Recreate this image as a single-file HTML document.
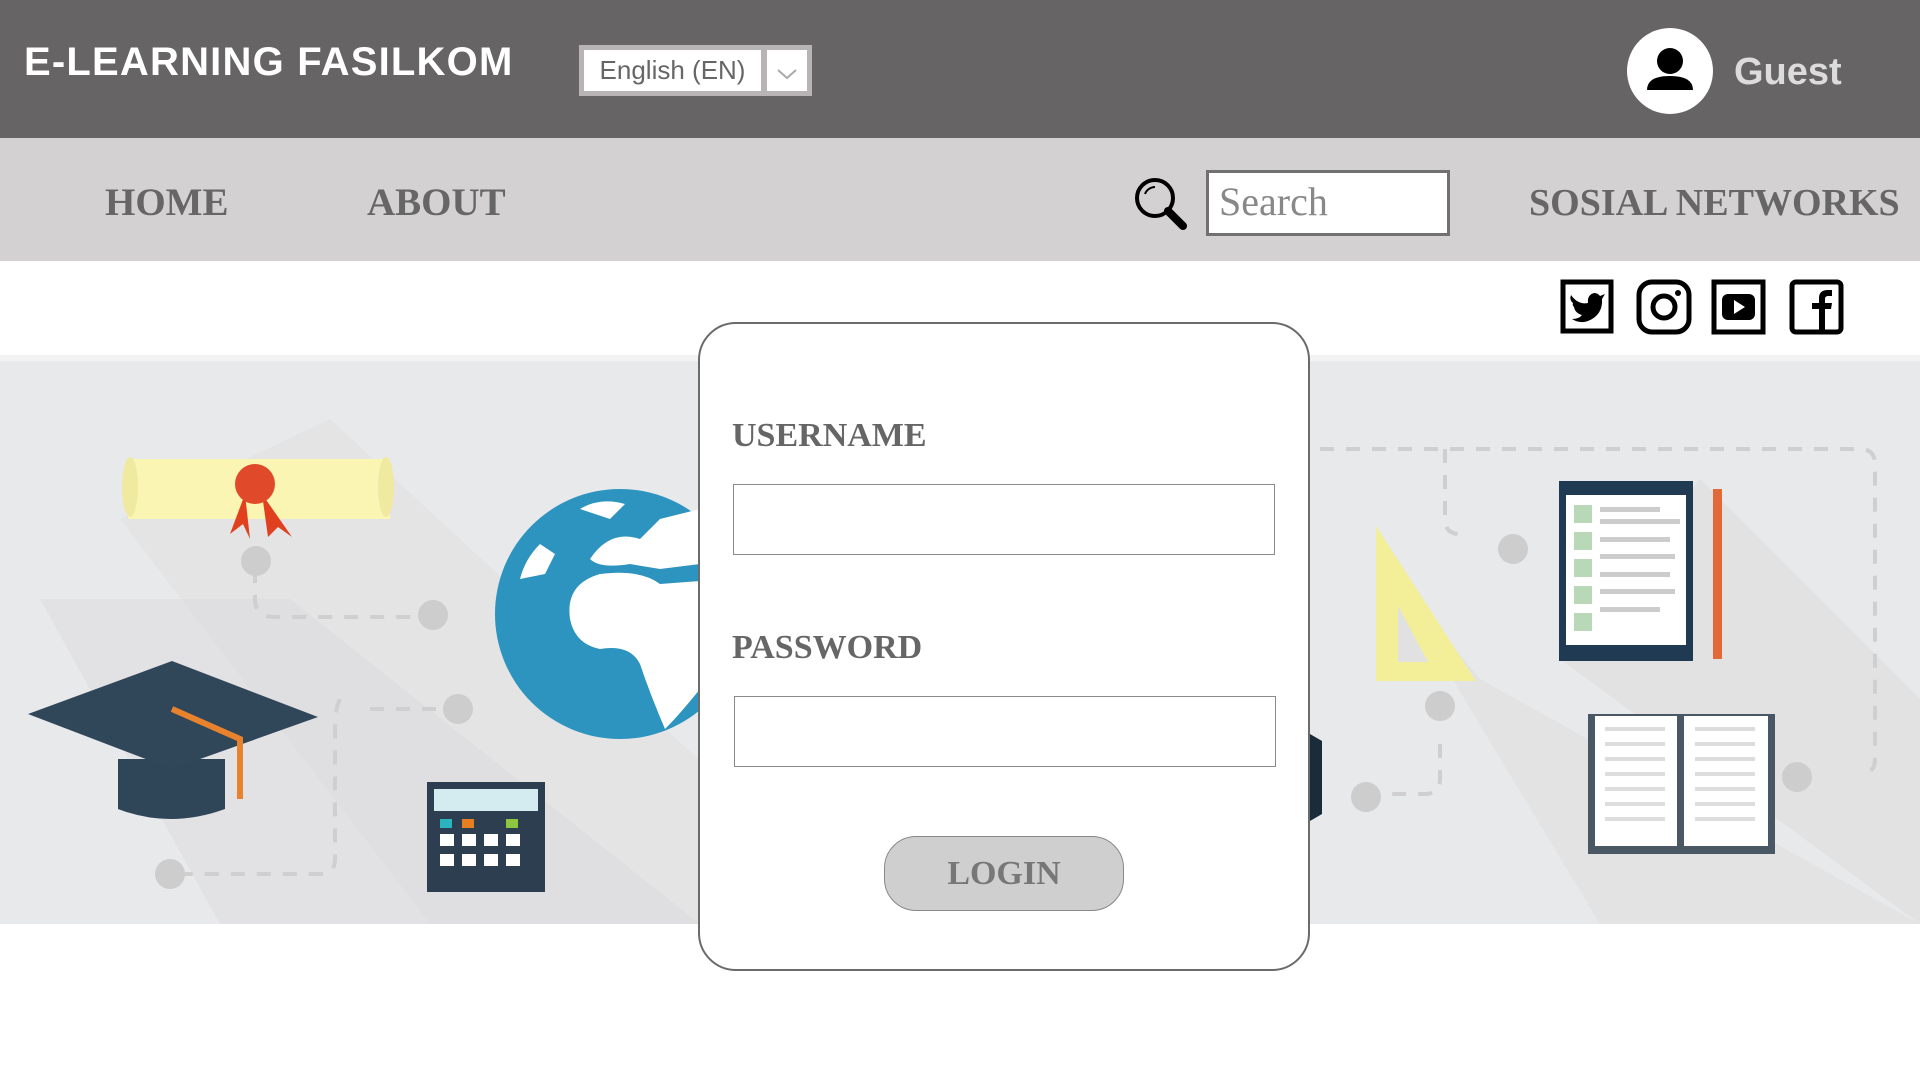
<!DOCTYPE html>
<html><head><meta charset="utf-8"><style>
*{margin:0;padding:0;box-sizing:border-box}
body{width:1920px;height:1080px;overflow:hidden;background:#fff;position:relative;font-family:"Liberation Sans",sans-serif}
.abs{position:absolute}
.hdr{left:0;top:0;width:1920px;height:138px;background:#666465}
.title{left:24px;top:40px;color:#fff;font-weight:bold;font-size:40px;letter-spacing:1.2px}
.sel{left:579px;top:45px;width:233px;height:51px;background:#b8b4b5;}
.sel .t{position:absolute;left:5px;top:5px;width:177px;height:41px;background:#fff;color:#666;font-size:26px;text-align:center;line-height:41px}
.sel .a{position:absolute;left:188px;top:5px;width:40px;height:41px;background:#fff}
.nav{left:0;top:138px;width:1920px;height:123px;background:#d3d1d2}
.nv{font-family:"Liberation Serif",serif;font-weight:bold;color:#666;font-size:39px;top:180px}
.search{left:1206px;top:170px;width:244px;height:66px;background:#fff;border:3px solid #717171;font-family:"Liberation Serif",serif;font-size:40px;color:#888;padding-left:10px;line-height:58px}
.band{left:0;top:359px;width:1920px;height:565px;background:#e8e9ea}
.card{left:698px;top:322px;width:612px;height:649px;background:#fff;border:2.5px solid #6b6b6b;border-radius:38px}
.lbl{font-family:"Liberation Serif",serif;font-weight:bold;color:#666;font-size:34px}
.inp{width:542px;height:71px;border:1.5px solid #8a8a8a;background:#fff}
.btn{left:884px;top:836px;width:240px;height:75px;background:#cfcfcf;border:1.5px solid #888;border-radius:32px;text-align:center;line-height:74px;font-family:"Liberation Serif",serif;font-weight:bold;color:#777;font-size:34px}
</style></head><body>
<div class="abs hdr"></div>
<div class="abs title">E-LEARNING FASILKOM</div>
<div class="abs sel"><div class="t">English (EN)</div><div class="a"><svg width="40" height="41"><path d="M11 20 L20 28 L29 20" stroke="#aaa" stroke-width="2" fill="none"/></svg></div></div>
<svg class="abs" style="left:1627px;top:28px" width="86" height="86"><circle cx="43" cy="43" r="43" fill="#fff"/><circle cx="43" cy="33" r="13" fill="#000"/><path d="M20 62 Q20 48 43 48 Q66 48 66 62 Z" fill="#000"/></svg>
<div class="abs" style="left:1734px;top:51px;color:#dcdcdc;font-weight:bold;font-size:38px">Guest</div>

<div class="abs nav"></div>
<div class="abs nv" style="left:105px">HOME</div>
<div class="abs nv" style="left:367px">ABOUT</div>
<svg class="abs" style="left:1131px;top:174px" width="60" height="60"><circle cx="24" cy="24" r="18" fill="none" stroke="#000" stroke-width="4"/><path d="M14 20 A11 11 0 0 1 24 13" stroke="#000" stroke-width="2" fill="none"/><path d="M37 37 L52 52" stroke="#000" stroke-width="8" stroke-linecap="round"/></svg>
<div class="abs search">Search</div>
<div class="abs nv" style="left:1529px;font-size:38px;top:181px">SOSIAL NETWORKS</div>

<svg class="abs" style="left:1560px;top:279px" width="290" height="56">
<rect x="3" y="3" width="48" height="49" fill="none" stroke="#000" stroke-width="5"/>
<path d="M11 16 Q18 26 28 24 Q27 16 34 14 Q38 14 40 17 L45 15 L42 20 Q43 36 28 42 Q20 45 12 40 Q19 40 22 36 Q15 34 14 28 Q12 26 13 24 Q9 21 11 16Z" fill="#000"/>
<rect x="79" y="3" width="50" height="50" rx="13" fill="none" stroke="#000" stroke-width="5"/><circle cx="104" cy="28" r="11" fill="none" stroke="#000" stroke-width="5"/><circle cx="118" cy="14" r="3" fill="#000"/>
<rect x="154" y="3" width="49" height="50" fill="none" stroke="#000" stroke-width="5"/><rect x="162" y="15" width="33" height="26" rx="6" fill="#000"/><path d="M174 21 L185 28 L174 35Z" fill="#fff"/>
<rect x="232" y="3" width="49" height="50" rx="4" fill="none" stroke="#000" stroke-width="5"/><path d="M259 53 V30 H252 V24 H259 V19 Q259 11 268 11 H272 V17 H268 Q265 17 265 20 V24 H272 L271 30 H265 V53Z" fill="#000"/>
</svg>

<div class="abs band"></div>
<div class="abs" style="left:0;top:355px;width:1920px;height:6px;background:#f3f3f3"></div>
<svg class="abs" style="left:0;top:359px" width="1920" height="565">
<path d="M120 160 L330 60 L720 420 L720 565 L430 565Z" fill="#dcdcdd" opacity=".35"/>
<path d="M40 240 L290 240 L700 565 L220 565Z" fill="#d8d8d9" opacity=".35"/>
<path d="M1380 200 L1480 320 L1920 565 L1600 565Z" fill="#dadadb" opacity=".35"/>
<path d="M1560 300 L1700 120 L1920 340 L1920 565Z" fill="#d6d6d7" opacity=".35"/>
<g stroke="#cfcfcf" stroke-width="4" stroke-dasharray="14 12" fill="none">
<path d="M255 210 V240 Q255 258 275 258 H420"/><path d="M340 340 Q335 350 335 370 V500 Q335 515 320 515 H180"/><path d="M370 350 H440"/>
<path d="M1320 90 H1860 Q1875 90 1875 105 V400 Q1875 415 1860 415"/><path d="M1445 90 V160 Q1445 175 1460 175"/><path d="M1440 385 V420 Q1440 435 1425 435 H1370"/>
</g>
<g fill="#cdcdcd"><circle cx="256" cy="202" r="15"/><circle cx="433" cy="256" r="15"/><circle cx="458" cy="350" r="15"/><circle cx="170" cy="515" r="15"/><circle cx="1513" cy="190" r="15"/><circle cx="1440" cy="347" r="15"/><circle cx="1366" cy="438" r="15"/><circle cx="1797" cy="418" r="15"/></g>
<rect x="128" y="100" width="262" height="60" fill="#fbf5b3"/><ellipse cx="130" cy="128" rx="8" ry="30" fill="#f0e9a0"/><ellipse cx="386" cy="128" rx="8" ry="30" fill="#f0e9a0"/>
<path d="M245 135 L230 175 L243 165 L250 180Z M262 135 L268 178 L278 168 L292 178Z" fill="#e0401e"/><circle cx="255" cy="125" r="20" fill="#e04a2a"/>
<path d="M118 400 L118 450 Q170 470 225 450 L225 400Z" fill="#2f4558"/>
<path d="M28 355 L172 302 L318 358 L172 410Z" fill="#304659"/>
<path d="M172 350 L240 380 L240 440" stroke="#e8822c" stroke-width="6" fill="none"/>
<circle cx="620" cy="255" r="125" fill="#2d93bf"/>
<path d="M570 260 Q565 225 600 215 Q640 210 660 225 L700 222 L700 330 Q680 355 665 370 Q650 335 640 305 Q630 285 600 290 Q575 285 570 260Z" fill="#fff"/>
<path d="M590 200 Q610 170 640 180 L660 160 L700 150 L700 205 L660 210 L630 205 Q600 210 590 200Z" fill="#fff"/>
<path d="M520 220 Q525 200 540 185 L555 195 L545 215Z" fill="#fff"/>
<path d="M580 150 Q600 138 625 145 L610 160Z" fill="#fff"/>
<rect x="427" y="423" width="118" height="110" fill="#2c3e50"/><rect x="434" y="430" width="104" height="22" fill="#d4ecf0"/>
<g fill="#fff"><rect x="440" y="475" width="14" height="12"/><rect x="462" y="475" width="14" height="12"/><rect x="484" y="475" width="14" height="12"/><rect x="506" y="475" width="14" height="12"/><rect x="440" y="495" width="14" height="12"/><rect x="462" y="495" width="14" height="12"/><rect x="484" y="495" width="14" height="12"/><rect x="506" y="495" width="14" height="12"/></g>
<rect x="440" y="460" width="12" height="9" fill="#2ab4c0"/><rect x="462" y="460" width="12" height="9" fill="#e67e22"/><rect x="506" y="460" width="12" height="9" fill="#8dc63f"/>
<path d="M1376 167 L1376 322 L1476 322Z" fill="#f3ee98"/><path d="M1398 247 L1398 303 L1428 303Z" fill="#e1e1e1"/>
<rect x="1559" y="122" width="134" height="180" fill="#1f3a52"/><rect x="1566" y="136" width="120" height="150" fill="#fff"/>
<g fill="#ccc"><rect x="1600" y="148" width="60" height="5"/><rect x="1600" y="160" width="80" height="5"/><rect x="1600" y="178" width="70" height="5"/><rect x="1600" y="195" width="75" height="5"/><rect x="1600" y="213" width="70" height="5"/><rect x="1600" y="230" width="75" height="5"/><rect x="1600" y="248" width="60" height="5"/></g>
<g fill="#b8d8b8"><rect x="1574" y="146" width="18" height="18"/><rect x="1574" y="173" width="18" height="18"/><rect x="1574" y="200" width="18" height="18"/><rect x="1574" y="227" width="18" height="18"/><rect x="1574" y="254" width="18" height="18"/></g>
<rect x="1713" y="130" width="9" height="170" fill="#e26a38"/>
<rect x="1588" y="355" width="187" height="140" fill="#4a5866"/><rect x="1595" y="357" width="82" height="130" fill="#fff"/><rect x="1684" y="357" width="84" height="130" fill="#fff"/>
<g stroke="#ddd" stroke-width="4"><path d="M1605 370 H1665 M1605 385 H1665 M1605 400 H1665 M1605 415 H1665 M1605 430 H1665 M1605 445 H1665 M1605 460 H1665 M1695 370 H1755 M1695 385 H1755 M1695 400 H1755 M1695 415 H1755 M1695 430 H1755 M1695 445 H1755 M1695 460 H1755"/></g>
<path d="M1310 375 L1322 382 L1322 455 L1310 462Z" fill="#1a2b3a"/>
</svg>

<div class="abs card"></div>
<div class="abs lbl" style="left:732px;top:417px">USERNAME</div>
<div class="abs inp" style="left:733px;top:484px"></div>
<div class="abs lbl" style="left:732px;top:629px">PASSWORD</div>
<div class="abs inp" style="left:734px;top:696px"></div>
<div class="abs btn">LOGIN</div>
</body></html>
